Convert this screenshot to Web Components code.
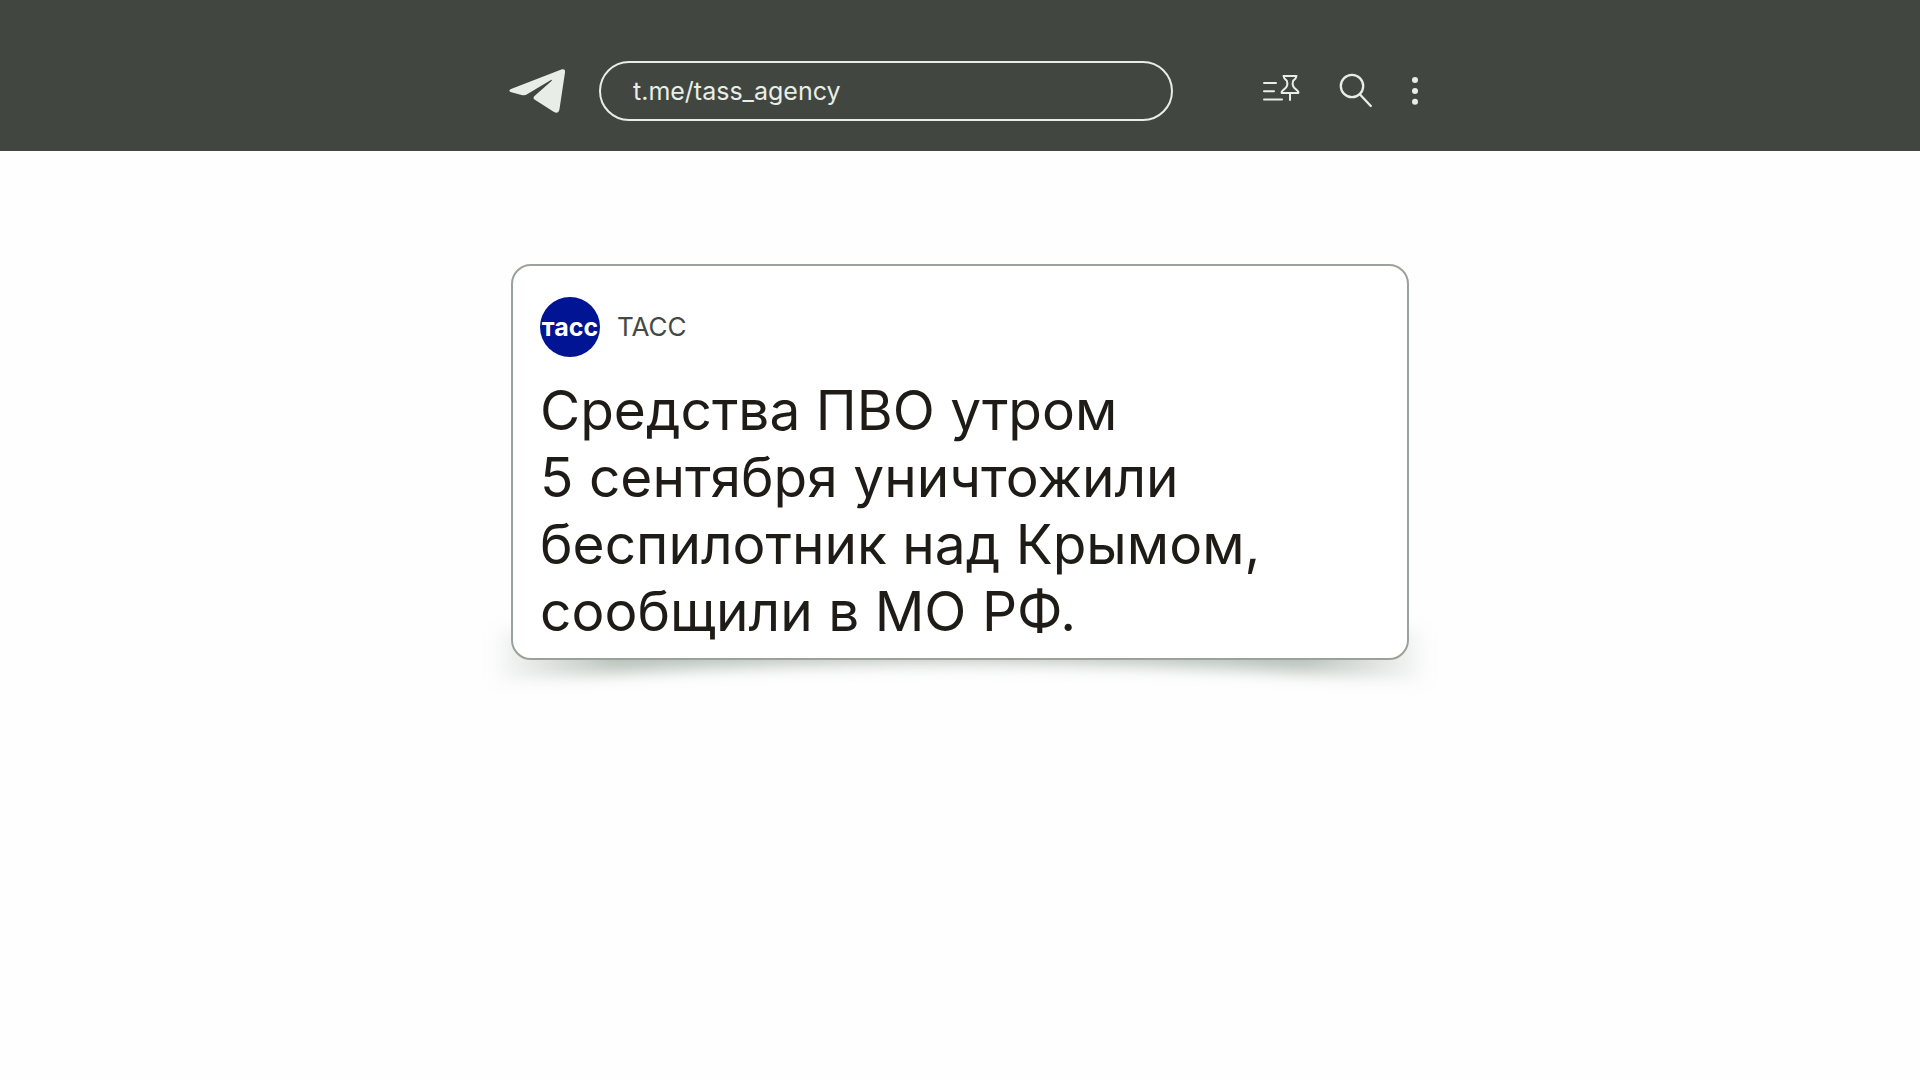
<!DOCTYPE html>
<html lang="ru">
<head>
<meta charset="utf-8">
<meta name="viewport" content="width=device-width, initial-scale=1">
<title>ТАСС</title>
<style>
  body{
    margin: 0;
    min-height: 100vh;
    background: #fefefe;
    font-family: Inter, "Liberation Sans", sans-serif;
  }
</style>
</head>
<body>
<channel-bar address="t.me/tass_agency"></channel-bar>
<main>
  <post-card>
    <channel-badge slot="author" logo="тасс">ТАСС</channel-badge>
    Средства ПВО утром<br>
    5 сентября уничтожили<br>
    беспилотник над Крымом,<br>
    сообщили в МО РФ.
  </post-card>
</main>

<script>
class ChannelBar extends HTMLElement {
  constructor() {
    super();
    const root = this.attachShadow({ mode: "open" });
    root.innerHTML = `
      <style>
        :host{ display:block; background:#414640; --fg:#e8eee7; color:var(--fg); }
        .row{
          box-sizing:border-box; max-width:920px; margin:0 auto;
          padding:61px 0 30px;
          display:flex; align-items:center;
        }
        svg{ display:block; }
        .logo{ flex:none; margin-right:27px; }
        form{ flex:1; min-width:0; }
        input{
          box-sizing:border-box; display:block; width:100%; height:60px;
          padding:0 32px; border:2px solid var(--fg); border-radius:30px;
          background:transparent; color:inherit; outline:0;
          font:400 25px/32px Inter, "Liberation Sans", sans-serif;
        }
        nav{ flex:none; display:flex; gap:34px; margin-left:89px; }
        button{ padding:0; border:0; background:none; color:inherit; cursor:pointer; }
      </style>
      <header class="row">
        <a class="logo" href="#" aria-label="Telegram">
          <svg width="72" height="60" viewBox="0 0 72 60" fill="#e8eee7">
            <path d="M11 28 62 8.300Q65.500 7.500 65 11.500L59.500 48Q58.500 53.500 54 51L34.500 38.500Q32.500 37 34.500 35L51.500 20Q53 18.200 50.500 19.200L27.500 33Q25 35 21.500 34L10.500 31Q8 29.500 11 28Z"/>
          </svg>
        </a>
        <form><input type="text" aria-label="Адрес канала"></form>
        <nav>
          <button type="button" aria-label="Закреплённые сообщения">
            <svg width="40" height="60" viewBox="0 0 40 60" fill="none" stroke="currentColor" stroke-width="2" stroke-linecap="round" stroke-linejoin="round">
              <path d="M2 22h12M2 30.300h10M2 38.500h18"/>
              <path d="M21.500 15h13l-1 2.500-2.300 2.200c-1 3-.6 5.300 1 7l3.300 3q1.300 1.200.9 2.300H19.600q-.4-1.100.9-2.300l3.300-3c1.600-1.700 2-4 1-7l-2.300-2.200zM28 32v7"/>
            </svg>
          </button>
          <button type="button" aria-label="Поиск">
            <svg width="40" height="60" viewBox="0 0 40 60" fill="none" stroke="currentColor" stroke-width="2.300" stroke-linecap="round">
              <circle cx="16" cy="25" r="11.200"/><path d="M24 33.500 34.800 45"/>
            </svg>
          </button>
          <button type="button" aria-label="Меню">
            <svg width="10" height="60" viewBox="0 0 10 60" fill="currentColor">
              <circle cx="5" cy="19" r="3"/><circle cx="5" cy="30" r="3"/><circle cx="5" cy="40.800" r="3"/>
            </svg>
          </button>
        </nav>
      </header>
    `;
    this._input = root.querySelector("input");
  }

  connectedCallback() {
    this._input.value = this.getAttribute("address") || "";
  }
}

class ChannelBadge extends HTMLElement {
  constructor() {
    super();
    const root = this.attachShadow({ mode: "open" });
    root.innerHTML = `
      <style>
        :host{ display:flex; align-items:center; gap:17px; color:#454944; font-size:26px; line-height:32px; }
        .logo{
          flex:none; width:60px; height:60px; border-radius:50%;
          display:grid; place-items:center;
          background:#001494; color:#fff;
          font-size:25px; font-weight:700; line-height:32px;
        }
      </style>
      <span class="logo"></span>
      <span><slot></slot></span>
    `;
    this._logo = root.querySelector(".logo");
  }

  connectedCallback() {
    this._logo.textContent = this.getAttribute("logo") || "";
  }
}

class PostCard extends HTMLElement {
  constructor() {
    super();
    const root = this.attachShadow({ mode: "open" });
    root.innerHTML = `
      <style>
        :host{ display:block; position:relative; max-width:898px; margin:113px auto 0; padding-bottom:60px; }
        /* lifted-corner shadow, hangs below the card */
        .shadow{ position:absolute; left:-5%; bottom:0; width:110%; height:160px; }
        article{
          position:relative; box-sizing:border-box;
          padding:31px 27px 13px; border:2px solid #9ba29b; border-radius:20px;
          background:#fff;
        }
        p{ margin:20px 0 0; color:#1f1c17; font-size:55px; line-height:67px; }
      </style>
      <svg class="shadow" viewBox="0 0 990 160" preserveAspectRatio="none" aria-hidden="true">
        <defs>
          <linearGradient id="fade" x1="0" x2="1" y1="0" y2="0">
            <stop offset="0" stop-color="#8d9b91" stop-opacity=".05"/>
            <stop offset=".06" stop-color="#8d9b91" stop-opacity=".3"/>
            <stop offset=".13" stop-color="#8d9b91" stop-opacity=".6"/>
            <stop offset=".5" stop-color="#8d9b91" stop-opacity=".55"/>
            <stop offset=".87" stop-color="#8d9b91" stop-opacity=".6"/>
            <stop offset=".94" stop-color="#8d9b91" stop-opacity=".3"/>
            <stop offset="1" stop-color="#8d9b91" stop-opacity=".05"/>
          </linearGradient>
          <filter id="soft" x="-5%" y="-40%" width="110%" height="180%"><feGaussianBlur stdDeviation="8"/></filter>
        </defs>
        <path d="M30 70H960V121Q495 85 30 121Z" fill="url(#fade)" filter="url(#soft)"/>
      </svg>
      <article>
        <slot name="author"></slot>
        <p><slot></slot></p>
      </article>
    `;
  }
}

customElements.define("channel-bar", ChannelBar);
customElements.define("channel-badge", ChannelBadge);
customElements.define("post-card", PostCard);
</script>
</body>
</html>
